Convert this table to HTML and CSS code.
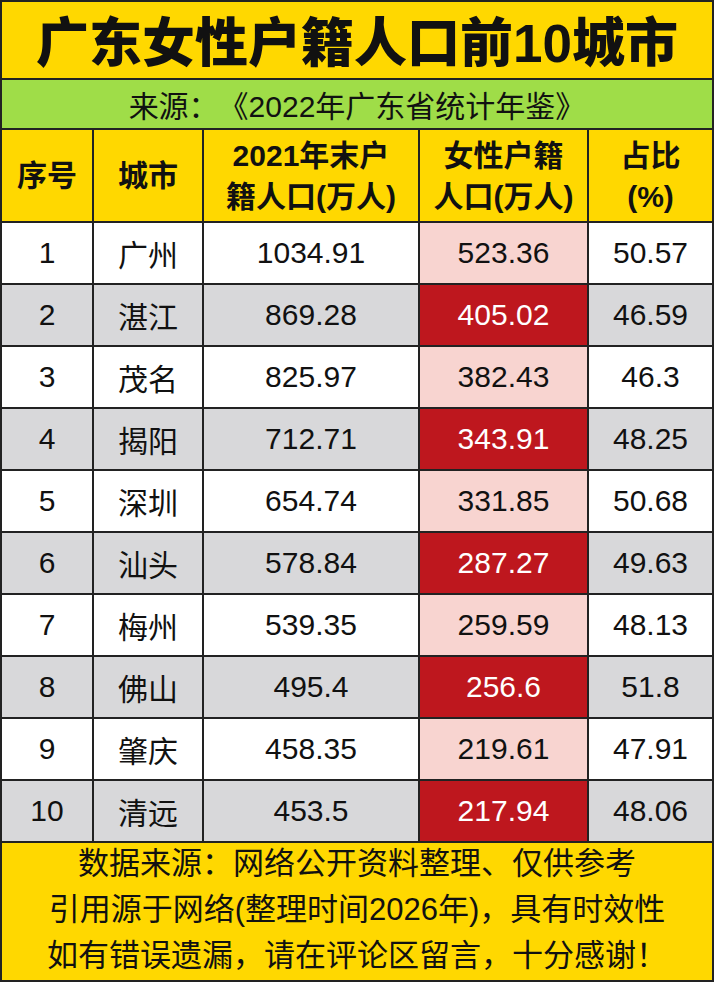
FILE: index.html
```html
<!DOCTYPE html>
<html lang="zh-CN">
<head>
<meta charset="utf-8">
<title>广东女性户籍人口前10城市</title>
<link rel="stylesheet" href="styles.css">
</head>
<body>
<div class="sheet">
  <div class="title span">广东女性户籍人口前10城市</div>
  <div class="source span">来源：《2022年广东省统计年鉴》</div>

  <div class="th">序号</div>
  <div class="th">城市</div>
  <div class="th">2021年末户<br>籍人口(万人)</div>
  <div class="th">女性户籍<br>人口(万人)</div>
  <div class="th">占比<br>(%)</div>

  <div class="td">1</div><div class="td">广州</div><div class="td">1034.91</div><div class="td pink">523.36</div><div class="td">50.57</div>
  <div class="td gray">2</div><div class="td gray">湛江</div><div class="td gray">869.28</div><div class="td red">405.02</div><div class="td gray">46.59</div>
  <div class="td">3</div><div class="td">茂名</div><div class="td">825.97</div><div class="td pink">382.43</div><div class="td">46.3</div>
  <div class="td gray">4</div><div class="td gray">揭阳</div><div class="td gray">712.71</div><div class="td red">343.91</div><div class="td gray">48.25</div>
  <div class="td">5</div><div class="td">深圳</div><div class="td">654.74</div><div class="td pink">331.85</div><div class="td">50.68</div>
  <div class="td gray">6</div><div class="td gray">汕头</div><div class="td gray">578.84</div><div class="td red">287.27</div><div class="td gray">49.63</div>
  <div class="td">7</div><div class="td">梅州</div><div class="td">539.35</div><div class="td pink">259.59</div><div class="td">48.13</div>
  <div class="td gray">8</div><div class="td gray">佛山</div><div class="td gray">495.4</div><div class="td red">256.6</div><div class="td gray">51.8</div>
  <div class="td">9</div><div class="td">肇庆</div><div class="td">458.35</div><div class="td pink">219.61</div><div class="td">47.91</div>
  <div class="td gray">10</div><div class="td gray">清远</div><div class="td gray">453.5</div><div class="td red">217.94</div><div class="td gray">48.06</div>

  <div class="footer span">
    <p>数据来源：网络公开资料整理、仅供参考</p>
    <p>引用源于网络(整理时间2026年)，具有时效性</p>
    <p>如有错误遗漏，请在评论区留言，十分感谢！</p>
  </div>
</div>
</body>
</html>
```

FILE: styles.css
```css
html, body {
  margin: 0;
  padding: 0;
  background: #ffffff;
}

.sheet {
  width: 714px;
  box-sizing: border-box;
  padding: 2px;
  background: #222222;
  display: grid;
  grid-template-columns: 90px 108px 214px 167px 123px;
  grid-template-rows: 76px 48px 91px repeat(10, 60px) 137px;
  gap: 2px;
  font-family: "Liberation Sans", "Noto Sans CJK SC", sans-serif;
  color: #111111;
  text-spacing-trim: space-all;
}

.span {
  grid-column: 1 / -1;
}

.title {
  background: #ffd800;
  display: flex;
  align-items: center;
  justify-content: center;
  font-weight: 900;
  font-size: 53px;
  padding-bottom: 2px;
}

.source {
  background: #9fdd48;
  display: flex;
  align-items: center;
  justify-content: center;
  font-size: 30px;
}

.th {
  background: #ffd800;
  display: flex;
  align-items: center;
  justify-content: center;
  text-align: center;
  font-weight: 700;
  font-size: 30px;
  line-height: 41px;
}

.td {
  background: #ffffff;
  display: flex;
  align-items: center;
  justify-content: center;
  font-size: 30px;
}

.gray {
  background: #d8d8da;
}

.pink {
  background: #f8d4d0;
}

.red {
  background: #be171e;
  color: #ffffff;
}

.footer {
  background: #ffd800;
  display: flex;
  flex-direction: column;
  align-items: center;
  justify-content: center;
  font-size: 31px;
  font-weight: 400;
  padding-bottom: 4px;
}

.footer p {
  margin: 0;
  line-height: 46px;
}
```
